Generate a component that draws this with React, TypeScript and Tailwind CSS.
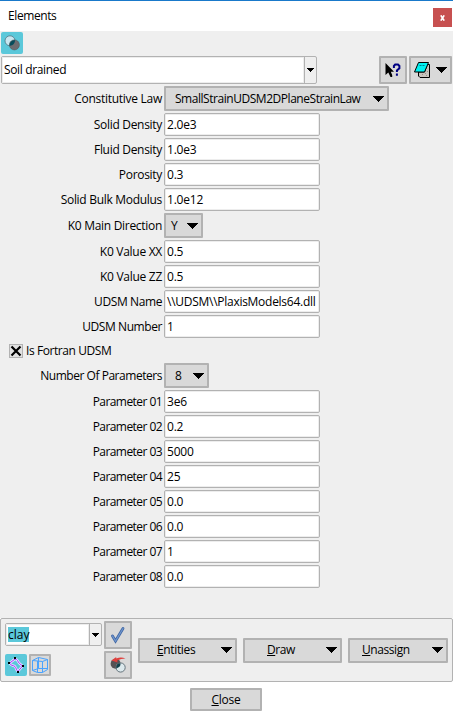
import type { ReactNode } from "react";

function Arrow({ small = false }: { small?: boolean }) {
  return small ? (
    <svg width="7" height="4" viewBox="0 0 7 4" className="block" shapeRendering="crispEdges">
      <path d="M0 0h7v1h-1v1h-1v1h-1v1h-1v-1h-1v-1h-1v-1h-1z" />
    </svg>
  ) : (
    <svg width="11" height="6" viewBox="0 0 11 6" className="block shrink-0" shapeRendering="crispEdges">
      <path d="M0 0h11v1h-1v1h-1v1h-1v1h-1v1h-1v1h-1v-1h-1v-1h-1v-1h-1v-1h-1v-1h-1z" />
    </svg>
  );
}

function Button({ className = "", children }: { className?: string; children: ReactNode }) {
  return (
    <button className={`flex shrink-0 items-center rounded-[1px] border-2 border-[#b2b2b2] bg-[#d9d9d9] ${className}`}>
      {children}
    </button>
  );
}

function Label({ text, tracking }: { text: string; tracking: string }) {
  return <div className={`w-[162px] shrink-0 text-right ${tracking}`}>{text}</div>;
}

function Entry({ label, value, tracking, valueTracking = "tracking-[-0.2px]" }: { label: string; value: string; tracking: string; valueTracking?: string }) {
  return (
    <div className="flex h-[23px] items-center gap-[2px]">
      <Label text={label} tracking={tracking} />
      <div className={`flex h-[23px] w-[156px] items-center rounded-[2px] border border-[#b2b2b2] bg-white pl-[2px] shadow-[inset_0_0_0_1px_#ededed] ${valueTracking}`}>
        {value}
      </div>
    </div>
  );
}

const densities = [
  ["Solid Density", "2.0e3"],
  ["Fluid Density", "1.0e3"],
  ["Porosity", "0.3"],
  ["Solid Bulk Modulus", "1.0e12"],
];

const parameters = ["3e6", "0.2", "5000", "25", "0.0", "0.0", "1", "0.0"];

export default function App() {
  return (
    <div className="flex h-[717px] w-[453px] flex-col overflow-hidden bg-white font-['Open_Sans','Noto_Sans',sans-serif] text-[12px] leading-[16px] whitespace-nowrap text-black">
      <header className="flex h-[31px] shrink-0 items-start justify-between border-t border-[#1979ca] pr-px pl-[8px]">
        <span className="mt-[7px] tracking-[-0.4px]">Elements</span>
        <button className="mt-[7px] flex h-[19px] w-[19px] items-center justify-center bg-[#c75050]">
          <svg width="5" height="6" viewBox="0 0 5 6">
            <path d="M.8 .4L4.2 5.6M4.2 .4L.8 5.6" stroke="white" strokeWidth="1.7" />
          </svg>
        </button>
      </header>

      <main className="flex h-[587px] shrink-0 flex-col bg-[#efefef] pt-px">
        <div className="ml-px flex h-[22px] w-[22px] items-center justify-center rounded-[2px] bg-[#5bc8da]">
          <svg width="18" height="18" viewBox="0 0 18 18">
            <circle cx="7" cy="6.8" r="5" fill="#c8e6f0" stroke="#4d7480" strokeWidth=".8" />
            <circle cx="11.4" cy="10.9" r="5" fill="#6c6c70" stroke="#515c62" strokeWidth=".6" />
            <path d="M6.5 11.7A5 5 0 0 1 12 6.2A5 5 0 0 1 6.5 11.7Z" fill="#064c5b" />
          </svg>
        </div>

        <div className="mt-[2px] flex h-[28px] pl-px">
          <div className="flex h-[28px] w-[316px] rounded-[2px] border border-[#b2b2b2] bg-[#efefef]">
            <div className="flex flex-1 items-center bg-white pl-[2px] tracking-[-0.35px] shadow-[inset_0_0_0_1px_#ededed]">Soil drained</div>
            <div className="flex w-[12px] items-center justify-center border-l border-[#b2b2b2]"><Arrow small /></div>
          </div>
          <Button className="ml-[62px] h-[28px] w-[28px] justify-center">
            <svg width="20" height="18" viewBox="0 0 20 18" className="shrink-0">
              <path d="M2.5 2V14L5.3 11.5L7.5 16H9.2V14L7.8 10.8H11Z" fill="black" />
              <path d="M10.9 7V5L12.2 3.6H15L16.4 5V7.3L13.9 9.4V11M13.9 12.5V14.7" fill="none" stroke="#000083" strokeWidth="2" />
            </svg>
          </Button>
          <Button className="ml-[2px] h-[28px] w-[43px] gap-[5px] pl-[2px]">
            <svg width="18" height="18" viewBox="0 0 18 18">
              <path d="M14.5 3.5H16.5V16.5H7L5.5 15V11H11.5Z" fill="#c8c3bd" stroke="black" />
              <path d="M5.5 1.5H15.5L11.5 11H1.5Z" fill="#00f0f0" stroke="black" />
              <path d="M6.5 4.5h6" stroke="#007f8c" strokeDasharray="2 1" />
              <path d="M9 13.5h1M12 12.5h1M14 10.5h1M13 14.5h1" stroke="#918d87" />
            </svg>
            <Arrow />
          </Button>
        </div>

        <div className="mt-[2px] flex h-[25px] items-center gap-[2px]">
          <Label text="Constitutive Law" tracking="tracking-[-0.28px]" />
          <Button className="h-[25px] w-[225px] justify-between pr-[3px] pl-[9px]">
            <span className="tracking-[-0.46px]">SmallStrainUDSM2DPlaneStrainLaw</span>
            <Arrow />
          </Button>
        </div>
        <div className="mt-[2px] flex flex-col gap-[2px]">
          {densities.map(([label, value]) => (
            <Entry key={label} label={label} value={value} tracking="tracking-[-0.3px]" />
          ))}
        </div>

        <div className="mt-[2px] flex h-[25px] items-center gap-[2px]">
          <Label text="K0 Main Direction" tracking="tracking-[-0.3px]" />
          <Button className="h-[25px] w-[39px] justify-between pr-[3px] pl-[5px]"><span>Y</span><Arrow /></Button>
        </div>
        <div className="mt-[2px] flex flex-col gap-[2px]">
          <Entry label="K0 Value XX" value="0.5" tracking="tracking-[-0.28px]" />
          <Entry label="K0 Value ZZ" value="0.5" tracking="tracking-[-0.28px]" />
          <Entry label="UDSM Name" value={"\\\\UDSM\\\\PlaxisModels64.dll"} tracking="tracking-[-0.4px]" valueTracking="tracking-[-0.27px]" />
          <Entry label="UDSM Number" value="1" tracking="tracking-[-0.42px]" />
        </div>

        <div className="mt-[6px] flex h-[14px] items-center gap-[3px] pl-[9px]">
          <div className="flex h-[14px] w-[14px] items-center justify-center border border-[#b2b2b2] bg-[#e1e1e1]">
            <svg width="12" height="12" viewBox="0 0 12 12"><path d="M1.5 1.5L10.5 10.5M10.5 1.5L1.5 10.5" stroke="black" strokeWidth="2.2" /></svg>
          </div>
          <span className="tracking-[-0.42px]">Is Fortran UDSM</span>
        </div>

        <div className="mt-[5px] flex h-[25px] items-center gap-[2px]">
          <Label text="Number Of Parameters" tracking="tracking-[-0.46px]" />
          <Button className="h-[25px] w-[45px] justify-between pr-[3px] pl-[9px]"><span>8</span><Arrow /></Button>
        </div>
        <div className="mt-[2px] flex flex-col gap-[2px]">
          {parameters.map((value, i) => (
            <Entry key={i} label={`Parameter 0${i + 1}`} value={value} tracking="tracking-[-0.56px]" />
          ))}
        </div>
      </main>

      <section className="flex h-[64px] shrink-0 items-center rounded-[2px] border border-[#b2b2b2] bg-[#efefef] pl-[4px]">
        <div className="flex h-[58px] w-[97px] flex-col justify-between pt-[2px] pb-[3px]">
          <div className="flex h-[23px] rounded-[2px] border border-[#b2b2b2]">
            <div className="flex flex-1 items-center bg-white pl-[2px] shadow-[inset_0_0_0_1px_#ededed]">
              <span className="h-[15px] w-[21px] bg-[#5bc8da] leading-[15px]">clay</span>
            </div>
            <div className="flex w-[12px] items-center justify-center border-l border-[#b2b2b2]"><Arrow small /></div>
          </div>
          <div className="flex gap-[2px]">
            <div className="flex h-[22px] w-[22px] items-center justify-center rounded-[2px] bg-[#5bc8da]">
              <svg width="18" height="18" viewBox="0 0 18 18">
                <path d="M2.5 7.2L8 3C10.5 2.8 10.5 5.5 12.5 7.5L15.5 10L11 15.5C9 14.5 9.5 12 8 10.5C6 9 4 10 2.5 7.2Z" fill="none" stroke="#efe4ff" strokeWidth="2.4" />
                <path d="M2.5 7.2L8 3C10.5 2.8 10.5 5.5 12.5 7.5L15.5 10L11 15.5C9 14.5 9.5 12 8 10.5C6 9 4 10 2.5 7.2Z" fill="none" stroke="#a03cff" />
                <path d="M1 6h2v2H1zM7 1h2v2H7zM15 9h2v2h-2zM10 15h2v2h-2z" />
              </svg>
            </div>
            <Button className="h-[22px] w-[22px] justify-center">
              <svg width="18" height="18" viewBox="0 0 18 18" fill="none" stroke="#49a3ff" className="shrink-0">
                <path d="M1.5 4.5L7.5 1.5L16.5 3.5L11.5 5.5L1.5 4.5V14.5L6.5 16.5H11.5L16.5 13.5V3.5M11.5 5.5V16.5M6.5 5V16.5M7.5 1.5V12.5H16.5M1.5 14.5L7.5 12.5" />
              </svg>
            </Button>
          </div>
        </div>
        <div className="ml-[2px] flex flex-col gap-[2px]">
          <Button className="h-[28px] w-[28px] justify-center">
            <svg width="18" height="18" viewBox="0 0 18 18">
              <path d="M3.5 10L6.5 15L14 2.5" fill="none" stroke="#3f66a4" strokeWidth="2.8" strokeLinecap="round" />
              <path d="M3.5 10L6.5 15L14 2.5" fill="none" stroke="#7197ce" strokeWidth="1.2" strokeLinecap="round" />
            </svg>
          </Button>
          <Button className="h-[28px] w-[28px] justify-center">
            <svg width="18" height="18" viewBox="0 0 18 18">
              <circle cx="6.6" cy="7.7" r="5" fill="#555255" />
              <circle cx="11.6" cy="11.5" r="4.6" fill="#dce9ed" stroke="#65737b" />
              <path d="M7.2 12.4Q6.8 7 11.5 7.2Q12 11 7.2 12.4" fill="#13404a" />
              <path d="M2.5 4.5L7.2 1V2.6Q12 .4 16.5 2.6Q12 2.7 8.2 4.6L8.5 6.6Z" fill="#df3f3c" />
            </svg>
          </Button>
        </div>
        <div className="ml-[6px] flex gap-[6px]">
          <Button className="h-[25px] w-[99px] justify-between pr-[3px] pl-[17px]"><span className="tracking-[-0.35px]"><u>E</u>ntities</span><Arrow /></Button>
          <Button className="h-[25px] w-[99px] justify-between pr-[3px] pl-[22px]"><span className="tracking-[-0.45px]"><u>D</u>raw</span><Arrow /></Button>
          <Button className="h-[25px] w-[100px] justify-between pr-[3px] pl-[12px]"><span className="tracking-[-0.42px]"><u>U</u>nassign</span><Arrow /></Button>
        </div>
      </section>
      <footer className="mt-[6px] flex pl-[190px]">
        <Button className="h-[23px] w-[72px] justify-center"><span className="tracking-[-0.25px]"><u>C</u>lose</span></Button>
      </footer>
    </div>
  );
}
